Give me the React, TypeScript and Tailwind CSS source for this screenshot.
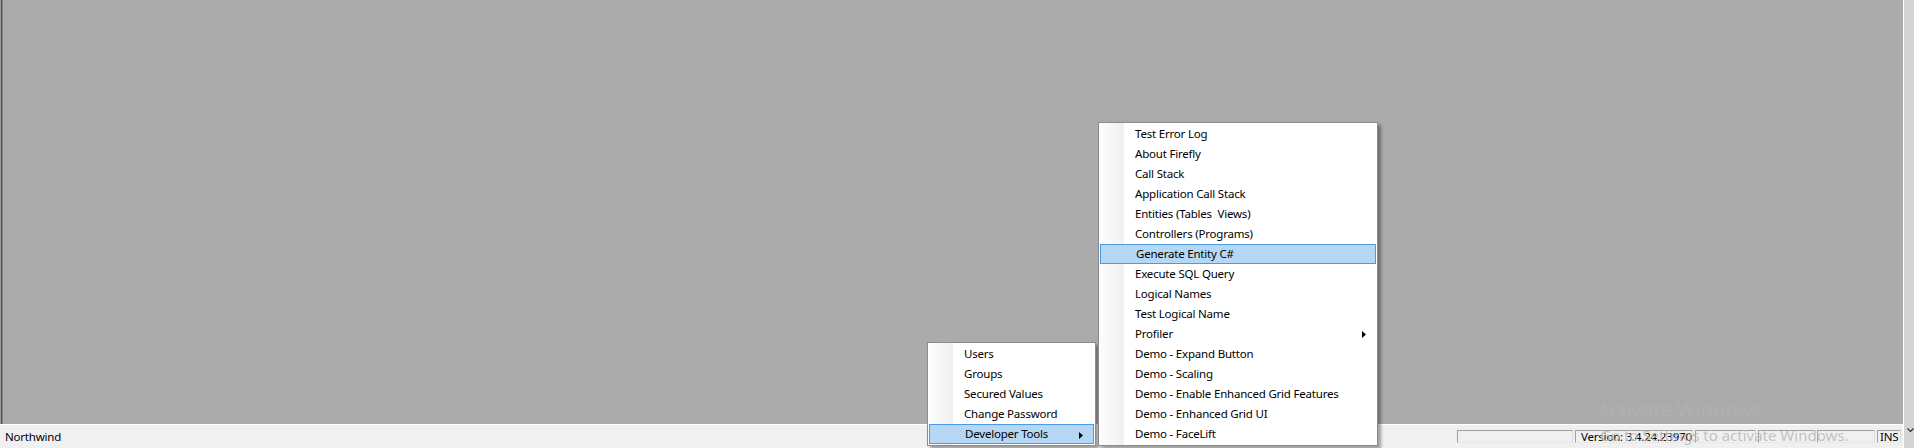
import React from "react";

const devItems = [
  "Test Error Log",
  "About Firefly",
  "Call Stack",
  "Application Call Stack",
  "Entities (Tables  Views)",
  "Controllers (Programs)",
  "Generate Entity C#",
  "Execute SQL Query",
  "Logical Names",
  "Test Logical Name",
  "Profiler",
  "Demo - Expand Button",
  "Demo - Scaling",
  "Demo - Enable Enhanced Grid Features",
  "Demo - Enhanced Grid UI",
  "Demo - FaceLift",
];

const mainItems = ["Users", "Groups", "Secured Values", "Change Password", "Developer Tools"];

function Arrow() {
  return (
    <svg width="4" height="7" viewBox="0 0 4 7" className="absolute right-[10px] top-[7px]">
      <path d="M0 0 L4 3.5 L0 7 Z" fill="#000" />
    </svg>
  );
}

function MenuItem({ label, active, sub }: { label: string; active?: boolean; sub?: boolean }) {
  return (
    <div
      className={
        "relative h-[20px] flex items-center pl-[35px] whitespace-pre " +
        (active ? "bg-[#b5d7f3] border border-[#4a9ae6] pl-[34px]" : "")
      }
    >
      {label}
      {sub && <Arrow />}
    </div>
  );
}

function Menu({ items, active, subs, className }: { items: string[]; active: string; subs: string[]; className: string }) {
  return (
    <div
      className={
        "absolute bg-white border border-[#8c8c8c] py-[1px] px-[1px] shadow-[3px_3px_3px_rgba(0,0,0,0.35)] text-black " +
        className
      }
    >
      <div className="absolute left-0 top-0 bottom-0 w-[25px] bg-gradient-to-r from-[#fdfdfd] to-[#f0f0f0]" />
      <div className="relative">
        {items.map((it) => (
          <MenuItem key={it} label={it} active={it === active} sub={subs.includes(it)} />
        ))}
      </div>
    </div>
  );
}

function Panel({ w, children }: { w: string; children?: React.ReactNode }) {
  return (
    <div
      className={
        "h-[13px] mb-[1px] border border-t-[#a0a0a0] border-l-[#a0a0a0] border-r-[#dcdcdc] border-b-[#e8e8e8] flex items-center pl-[2px] leading-[13px] whitespace-nowrap overflow-visible " +
        w
      }
    >
      {children}
    </div>
  );
}

export default function App() {
  return (
    <div className="relative w-[1914px] h-[448px] overflow-hidden flex font-['Noto_Sans',sans-serif] text-[11.5px] tracking-[-0.2px] text-black">
      <div className="flex-1 flex flex-col">
        <div className="flex-1 bg-[#ababab] flex">
          <div className="w-[1px] bg-[#a0a0a0]" />
          <div className="w-[1px] bg-[#4a4a4a]" />
          <div className="w-[1px] bg-[#858585]" />
        </div>
        <div className="h-[24px] bg-[#f0f0f0] border-t border-white flex items-center pr-[2px]">
          <div className="flex-1 pl-[5px]">Northwind</div>
          <div className="flex items-center gap-[2px]">
            <Panel w="w-[116px]" />
            <Panel w="w-[118px]">
              <span className="pl-[3px]">Version: 3.4.24.23970</span>
            </Panel>
            <Panel w="w-[61px]" />
            <Panel w="w-[57px]" />
            <Panel w="w-[58px]" />
            <Panel w="w-[24px]">INS</Panel>
          </div>
        </div>
      </div>
      <div className="w-[11px] flex flex-col border-l border-white bg-[#d4d4d4]">
        <div className="flex-1" />
        <div className="h-[18px] flex items-start justify-center pl-[2px] mb-[2px]">
          <svg width="7" height="5" viewBox="0 0 7 5">
            <path d="M0.5 0.5 L3.5 3.5 L6.5 0.5" stroke="#333" strokeWidth="1.2" fill="none" />
          </svg>
        </div>
      </div>

      <Menu
        items={mainItems}
        active="Developer Tools"
        subs={["Developer Tools"]}
        className="left-[927px] top-[342px] w-[169px]"
      />
      <Menu
        items={devItems}
        active="Generate Entity C#"
        subs={["Profiler"]}
        className="left-[1098px] top-[122px] w-[280px]"
      />

      <div className="absolute left-[1597px] top-[400px] text-[20px] leading-[20px] tracking-normal text-white/5 pointer-events-none whitespace-nowrap">
        Activate Windows
      </div>
      <div className="absolute left-[1600px] top-[428px] text-[15px] leading-[15px] tracking-normal text-[#b9b9b9]/85 pointer-events-none whitespace-nowrap">
        Go to Settings to activate Windows.
      </div>
    </div>
  );
}
